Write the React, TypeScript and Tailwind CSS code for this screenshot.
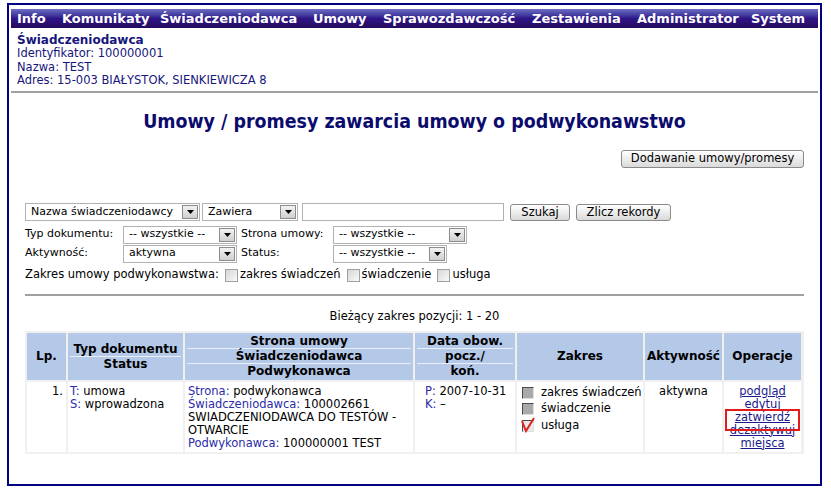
import React from 'react';

const menu = [
  { label: 'Info', w: 'w-[45px]' },
  { label: 'Komunikaty', w: 'w-[98px]' },
  { label: 'Świadczeniodawca', w: 'w-[153px]' },
  { label: 'Umowy', w: 'w-[70px]' },
  { label: 'Sprawozdawczość', w: 'w-[149px]' },
  { label: 'Zestawienia', w: 'w-[105px]' },
  { label: 'Administrator', w: 'w-[114px]' },
  { label: 'System', w: 'w-[60px]' },
];

function Arrow() {
  return (
    <span className="w-[16px] h-[14px] border border-[#8c8c8c] bg-gradient-to-b from-[#f2f2f2] to-[#cfcfcf] flex items-center justify-center">
      <svg width="7" height="4" viewBox="0 0 7 4">
        <path d="M0 0h7L3.5 4z" fill="#000" />
      </svg>
    </span>
  );
}

function FakeSelect({ value, className }: { value: string; className: string }) {
  return (
    <div className={`flex items-center h-[18px] border border-[#b2b2b2] bg-white pl-[5px] pr-px ${className}`}>
      <span className="flex-1 whitespace-nowrap overflow-hidden">{value}</span>
      <Arrow />
    </div>
  );
}

function Btn({ label, className }: { label: string; className: string }) {
  return (
    <button className={`h-[17px] border border-[#8a8a8a] rounded-[3px] bg-gradient-to-b from-white to-[#dadada] text-black text-[11.5px] leading-[15px] whitespace-nowrap ${className}`}>
      {label}
    </button>
  );
}

function FilterBox() {
  return <span className="inline-block w-[13px] h-[13px] border border-[#a0a0a0] bg-gradient-to-br from-[#d6d6d6] to-[#fafafa] mr-[2px]" />;
}

function GridBox({ checked }: { checked?: boolean }) {
  return (
    <span className="relative inline-block w-[12px] h-[12px] mr-[7px] shrink-0">
      <span
        className={`absolute inset-0 border-t border-l border-t-[#4a4a4a] border-l-[#4a4a4a] border-b border-r border-b-[#e0e0e0] border-r-[#e0e0e0] ${
          checked ? 'bg-[#e8e8e8]' : 'bg-[#a9a9a9]'
        }`}
      />
      {checked && (
        <svg className="absolute left-[-1px] top-[-3px]" width="16" height="16" viewBox="0 0 16 16">
          <path d="M1 4 L5 14 L13 1" stroke="#e02020" strokeWidth="2" fill="none" />
        </svg>
      )}
    </span>
  );
}

function Sep() {
  return <div className="h-px bg-[#e9eef8] mx-[2px]" />;
}

export default function App() {
  return (
    <div className="w-[831px] h-[499px] bg-white pt-[3px] font-['DejaVu_Sans',sans-serif] text-[11px] text-black">
      <div className="ml-[7px] w-[815px] h-[483px] border-2 border-[#000080] px-[2px] pt-[4px]">
        {/* menu */}
        <nav className="h-[19px] flex items-center pl-[6px] bg-gradient-to-b from-[#6e6ec4] via-[#2f1688] to-[#240a5c] text-white font-bold text-[13px]">
          {menu.map((m) => (
            <span key={m.label} className={`${m.w} whitespace-nowrap shrink-0`}>
              {m.label}
            </span>
          ))}
        </nav>

        {/* provider info */}
        <div className="pl-[6px] pt-[5px] text-[#16167c] text-[11.5px]">
          <div className="font-bold text-[12px] leading-[14px]">Świadczeniodawca</div>
          <div className="leading-[13.5px]">Identyfikator: 100000001</div>
          <div className="leading-[13.5px]">Nazwa: TEST</div>
          <div className="leading-[13.5px]">Adres: 15-003 BIAŁYSTOK, SIENKIEWICZA 8</div>
        </div>
        <div className="mt-[3px] h-[2px] bg-[#a0a0a0]" />

        <div className="px-[14px]">
          <h1 className="mt-[17px] text-center font-['DejaVu_Sans_Condensed',sans-serif] font-bold text-[19.4px] leading-[23px] text-[#0b0b6e]">
            Umowy / promesy zawarcia umowy o podwykonawstwo
          </h1>

          <div className="mt-[17px] flex justify-end">
            <Btn label="Dodawanie umowy/promesy" className="w-[183px] h-[18px]" />
          </div>

          {/* filters */}
          <div className="mt-[35px] flex items-center h-[19px]">
            <FakeSelect value="Nazwa świadczeniodawcy" className="w-[175px]" />
            <FakeSelect value="Zawiera" className="w-[96px] ml-[2px]" />
            <div className="w-[202px] h-[18px] ml-[4px] border border-[#b2b2b2] bg-white" />
            <Btn label="Szukaj" className="w-[60px] ml-[6px]" />
            <Btn label="Zlicz rekordy" className="w-[95px] ml-[6px]" />
          </div>

          <div className="mt-[4px] flex items-center h-[18px]">
            <span className="w-[98px]">Typ dokumentu:</span>
            <FakeSelect value="-- wszystkie --" className="w-[114px]" />
            <span className="w-[92px] ml-[4px]">Strona umowy:</span>
            <FakeSelect value="-- wszystkie --" className="w-[134px]" />
          </div>
          <div className="mt-[1px] flex items-center h-[18px]">
            <span className="w-[98px]">Aktywność:</span>
            <FakeSelect value="aktywna" className="w-[114px]" />
            <span className="w-[92px] ml-[4px]">Status:</span>
            <FakeSelect value="-- wszystkie --" className="w-[114px]" />
          </div>

          <div className="mt-[5px] flex items-center h-[15px] whitespace-nowrap text-[11.5px]">
            <span className="mr-[6px]">Zakres umowy podwykonawstwa:</span>
            <FilterBox />
            <span className="mr-[6px]">zakres świadczeń</span>
            <FilterBox />
            <span className="mr-[6px]">świadczenie</span>
            <FilterBox />
            <span>usługa</span>
          </div>

          <div className="mt-[11px] h-[2px] bg-[#a0a0a0]" />

          <div className="mt-[13px] text-center leading-[14px] text-[11.5px]">Bieżący zakres pozycji: 1 - 20</div>

          {/* results */}
          <div className="mt-[8px] p-[2px] bg-[#f0f0f0] grid grid-cols-[39px_115px_228px_100px_126px_77px_77px] gap-[2px] text-[11.5px]">
            {/* header */}
            <div className="h-[47px] bg-[#b4c8e8] font-bold text-[12px] flex items-center justify-center">Lp.</div>
            <div className="h-[47px] bg-[#b4c8e8] font-bold text-[12px] flex flex-col justify-center text-center">
              <div className="leading-[14px]">Typ dokumentu</div>
              <Sep />
              <div className="leading-[14px]">Status</div>
            </div>
            <div className="h-[47px] bg-[#b4c8e8] font-bold text-[12px] flex flex-col justify-center text-center">
              <div className="leading-[14px]">Strona umowy</div>
              <Sep />
              <div className="leading-[14px]">Świadczeniodawca</div>
              <Sep />
              <div className="leading-[14px]">Podwykonawca</div>
            </div>
            <div className="h-[47px] bg-[#b4c8e8] font-bold text-[12px] flex flex-col justify-center text-center">
              <div className="leading-[14px]">Data obow.</div>
              <Sep />
              <div className="leading-[14px]">pocz./</div>
              <Sep />
              <div className="leading-[14px]">koń.</div>
            </div>
            <div className="h-[47px] bg-[#b4c8e8] font-bold text-[12px] flex items-center justify-center">Zakres</div>
            <div className="h-[47px] bg-[#b4c8e8] font-bold text-[12px] flex items-center justify-center">Aktywność</div>
            <div className="h-[47px] bg-[#b4c8e8] font-bold text-[12px] flex items-center justify-center">Operacje</div>

            {/* row */}
            <div className="h-[70px] bg-white pt-[3px] pr-[3px] text-right leading-[13px]">1.</div>
            <div className="bg-white pt-[3px] pl-[2px] leading-[13px]">
              <div><span className="text-[#2b2ba8]">T:</span> umowa</div>
              <div><span className="text-[#2b2ba8]">S:</span> wprowadzona</div>
            </div>
            <div className="bg-white pt-[3px] pl-[3px] leading-[13px]">
              <div><span className="text-[#2b2ba8]">Strona:</span> podwykonawca</div>
              <div><span className="text-[#2b2ba8]">Świadczeniodawca:</span> 100002661</div>
              <div>SWIADCZENIODAWCA DO TESTÓW -</div>
              <div>OTWARCIE</div>
              <div><span className="text-[#2b2ba8]">Podwykonawca:</span> 100000001 TEST</div>
            </div>
            <div className="bg-white pt-[3px] pl-[10px] leading-[13px]">
              <div><span className="text-[#2b2ba8]">P:</span> 2007-10-31</div>
              <div><span className="text-[#2b2ba8]">K:</span> –</div>
            </div>
            <div className="bg-white pt-[3px] pl-[5px] whitespace-nowrap">
              <div className="h-[16px] flex items-center"><GridBox />zakres świadczeń</div>
              <div className="h-[17px] flex items-center"><GridBox />świadczenie</div>
              <div className="h-[17px] flex items-center"><GridBox checked />usługa</div>
            </div>
            <div className="bg-white pt-[3px] text-center leading-[13px]">aktywna</div>
            <div className="relative bg-white pt-[3px] text-center leading-[13px] text-[#1a1a8c]">
              <div><a className="underline">podgląd</a></div>
              <div><a className="underline">edytuj</a></div>
              <div><a className="underline">zatwierdź</a></div>
              <div><a className="underline">dezaktywuj</a></div>
              <div><a className="underline">miejsca</a></div>
              <div className="absolute left-[1px] top-[27px] w-[75px] h-[22px] border-2 border-[#e41b1b]" />
            </div>
          </div>
        </div>
      </div>
    </div>
  );
}
